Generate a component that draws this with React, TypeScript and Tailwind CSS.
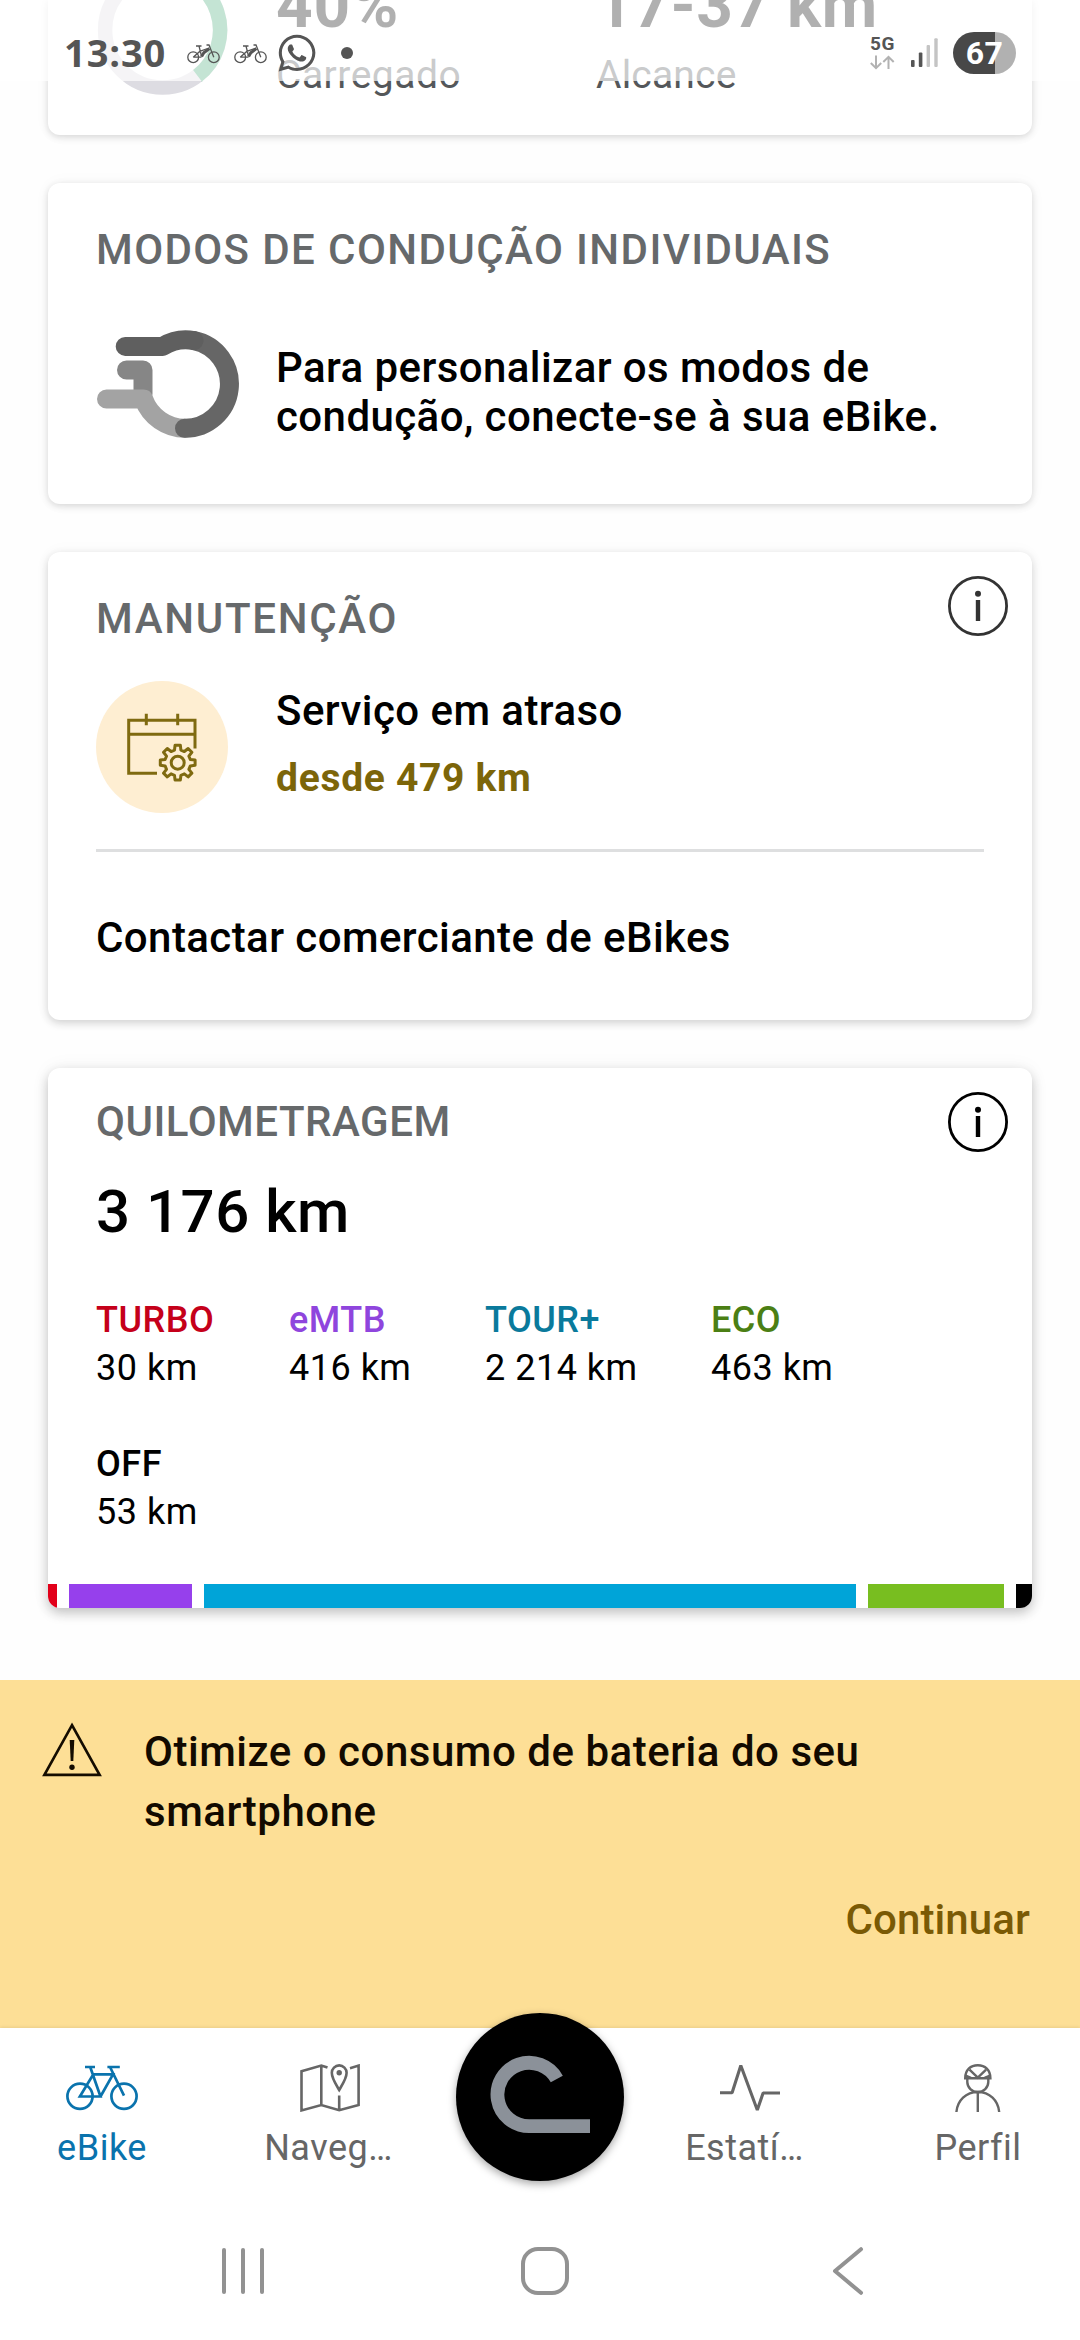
import type { ReactNode } from 'react'
import { clsx } from 'clsx'
import { FaWhatsapp } from 'react-icons/fa'

const MODES = [
  { name: 'TURBO', distance: '30 km', text: 'text-[#c5001a]', bar: 'bg-[#e2001a]', width: 9 },
  { name: 'eMTB', distance: '416 km', text: 'text-[#8f45dd]', bar: 'bg-[#9640ec]', width: 123 },
  { name: 'TOUR+', distance: '2 214 km', text: 'text-[#0a7a9c]', bar: 'bg-[#00a4d8]', width: 652 },
  { name: 'ECO', distance: '463 km', text: 'text-[#4b7f14]', bar: 'bg-[#78be20]', width: 136 },
  { name: 'OFF', distance: '53 km', text: 'text-black', bar: 'bg-black', width: 16 },
]

// Outline of an eight-toothed gear centred on (cx, cy)
function gearPath(cx: number, cy: number, outer: number, inner: number) {
  const points: string[] = []
  for (let i = 0; i < 8; i++) {
    const base = (i * Math.PI) / 4
    const corners: [number, number][] = [
      [-0.25, inner],
      [-0.15, outer],
      [0.15, outer],
      [0.25, inner],
    ]
    for (const [offset, r] of corners) {
      const x = cx + r * Math.cos(base + offset)
      const y = cy + r * Math.sin(base + offset)
      points.push(`${x.toFixed(2)} ${y.toFixed(2)}`)
    }
  }
  return `M${points.join('L')}Z`
}

/* ---------- Icons ---------- */

function InfoIcon({ className }: { className?: string }) {
  return (
    <svg width="60" height="60" viewBox="0 0 60 60" fill="none" className={className}>
      <circle cx="30" cy="30" r="28.6" stroke="currentColor" strokeWidth="2.8" />
      <circle cx="30" cy="17.8" r="3" fill="currentColor" />
      <path d="M30 24V45" stroke="currentColor" strokeWidth="4.4" />
    </svg>
  )
}

function ModesLogo() {
  return (
    <svg width="144" height="108" viewBox="0 0 144 108" fill="none" strokeWidth="19">
      <path d="M30.5 40H47V64" stroke="#868686" strokeLinecap="round" strokeLinejoin="round" />
      <path d="M10.5 69H47.6A44.5 44.5 0 0 0 89.3 98.3" stroke="#a3a3a3" strokeLinejoin="round" strokeLinecap="round" />
      <path d="M98 10.6A44.3 44.3 0 0 1 88.5 98.3" stroke="#666" strokeLinecap="round" />
      <path d="M29.2 16.4H66.7A44.3 44.3 0 0 1 98 10.6" stroke="#5f5f5f" strokeLinecap="round" strokeLinejoin="round" />
    </svg>
  )
}

function ServiceIcon() {
  return (
    <svg width="132" height="132" viewBox="0 0 132 132" fill="none" stroke="#7f6a10" strokeWidth="3">
      <path d="M61 92.3H32.7V39.3H99V67.5M32.7 53.3H99M50.3 32.7V44.3M81.7 32.7V44.3" />
      <path d={gearPath(81.7, 81.7, 17.6, 13)} strokeLinejoin="round" />
      <circle cx="81.7" cy="81.7" r="6.5" />
    </svg>
  )
}

function WarningIcon() {
  return (
    <svg width="60" height="56" viewBox="0 0 60 56" fill="none" className="text-[#140c00]">
      <path d="M30 3.2L57.6 52.8H2.4Z" stroke="currentColor" strokeWidth="2.7" />
      <path d="M27.7 18H32.3L31.3 39H28.7Z" fill="currentColor" />
      <circle cx="30" cy="45.3" r="2.7" fill="currentColor" />
    </svg>
  )
}

function BikeIcon() {
  return (
    <svg width="72" height="48" viewBox="0 0 72 48" fill="none" stroke="currentColor" strokeWidth="2.7">
      <circle cx="14" cy="32.3" r="12.6" />
      <circle cx="58" cy="32.3" r="12.6" />
      <path d="M19 3H29M24.2 3L34.5 32.5H13.9L27.3 10.3H47L34.5 32.5M41.4 3H53.8M44 3L58 31.7" />
    </svg>
  )
}

function MapIcon() {
  return (
    <svg width="60" height="48" viewBox="0 0 60 48" fill="none" stroke="currentColor" strokeWidth="2.6">
      <path d="M27.5 3.6L21.3 1.5L1.5 7.3V46.4L21.3 41L39.2 46.2L58.6 41V1.6L50 4.2M21.3 1.5V41M39.2 31.5V46" />
      <path d="M39.2 26C36 20.5 31.8 14.5 31.8 8.8A7.4 7.4 0 0 1 46.6 8.8C46.6 14.5 42.4 20.5 39.2 26Z" />
      <circle cx="39.2" cy="8.8" r="2.7" fill="currentColor" stroke="none" />
    </svg>
  )
}

function PulseIcon() {
  return (
    <svg width="60" height="48" viewBox="0 0 60 48" fill="none" stroke="currentColor" strokeWidth="3.1">
      <path d="M0 28.8H12.1L20.8 1.5L37.3 46L43.1 29H60" strokeLinejoin="bevel" />
    </svg>
  )
}

function RiderIcon() {
  return (
    <svg width="60" height="48" viewBox="0 0 60 48" fill="none" stroke="currentColor" strokeWidth="2.4">
      <path d="M17.2 14.2C17.2 6 22.5 1.3 29.8 1.3S42.4 6 42.4 14.2Z" />
      <path d="M21.5 5.6L29.8 13.6L38.1 5.6M17.6 11.5L23 13.8M42 11.5L36.6 13.8" />
      <path d="M19.3 14.5V18C19.3 23.5 24 28 29.8 28S40.3 23.5 40.3 18V14.5" />
      <path d="M8.4 48C9.4 36.5 18 28 29.8 28S50.2 36.5 51.2 48M29.8 28V48" />
    </svg>
  )
}

function SmallBikeIcon() {
  return (
    <svg width="33" height="20" viewBox="0 0 33 20" fill="none" stroke="#555" strokeWidth="1.3">
      <circle cx="6.2" cy="13.2" r="5.4" />
      <circle cx="26.8" cy="13.2" r="5.4" />
      <path d="M9 2H14.5M12 2L14.6 12.5M6.2 13.2L12.8 7.4L22 4M6.2 13.2H14.5M19.5 1H22L26.8 13.2" />
      <path d="M14.6 12.6L16.8 8.8L22.4 4.6" strokeWidth="3" strokeLinejoin="round" />
    </svg>
  )
}

/* ---------- Building blocks ---------- */

function Card({ className, children }: { className?: string; children: ReactNode }) {
  return (
    <section
      className={clsx(
        'mx-12 shrink-0 rounded-xl bg-white',
        className,
      )}
    >
      {children}
    </section>
  )
}

function Title({ className, children }: { className?: string; children: ReactNode }) {
  return <h2 className={clsx('text-[42px] font-medium leading-[48px] text-[#66696b]', className)}>{children}</h2>
}

function BatteryCard() {
  return (
    <Card className="flex h-[135px] rounded-t-none pl-12 shadow-[0_2px_7px_rgba(0,0,0,0.15),0_0_18px_rgba(0,0,0,0.03)]">
      <svg width="132" height="132" viewBox="0 0 132 132" fill="none" strokeWidth="14.5" className="-mt-9">
        <circle cx="66.6" cy="66" r="57.5" stroke="#dddce2" />
        <path d="M66.6 8.5A57.5 57.5 0 0 1 101.5 111.7" stroke="#41a874" />
      </svg>
      <div className="-mt-[30px] ml-12 w-[320px]">
        <div className="text-[64px] font-bold leading-[72px] tracking-[0.8px]">40%</div>
        <div className="mt-[12px] text-[39px] leading-[42px] tracking-[0.5px] text-[#54575a]">Carregado</div>
      </div>
      <div className="-mt-[30px]">
        <div className="text-[64px] font-bold leading-[72px] tracking-[0.5px]">17-37 km</div>
        <div className="mt-[12px] text-[39px] leading-[42px] tracking-[0.2px] text-[#54575a]">Alcance</div>
      </div>
    </Card>
  )
}

function RidingModesCard() {
  return (
    <Card className="mt-12 h-[321px] px-12 pt-[43px] shadow-[0_2px_7px_rgba(0,0,0,0.15),0_0_18px_rgba(0,0,0,0.03)]">
      <Title className="tracking-[1.4px]">MODOS DE CONDUÇÃO INDIVIDUAIS</Title>
      <div className="flex items-start">
        <div className="mt-14">
          <ModesLogo />
        </div>
        <p className="ml-9 mt-[69px] whitespace-nowrap text-[42px] font-medium leading-[49px] tracking-[0.42px]">
          Para personalizar os modos de
          <br />
          condução, conecte-se à sua eBike.
        </p>
      </div>
    </Card>
  )
}

function MaintenanceCard() {
  return (
    <Card className="mt-12 h-[468px] pt-6 shadow-[0_3px_8px_rgba(0,0,0,0.17),0_0_18px_rgba(0,0,0,0.03)]">
      <header className="flex items-start justify-between pl-12 pr-6">
        <Title className="mt-[19px] tracking-[1.7px]">MANUTENÇÃO</Title>
        <InfoIcon className="text-[#333]" />
      </header>
      <div className="mt-[38px] flex pl-12">
        <div className="size-[132px] rounded-full bg-[#feeed2]">
          <ServiceIcon />
        </div>
        <div className="ml-12 pt-[6px] leading-[48px]">
          <div className="text-[42px] font-medium tracking-[0.45px]">Serviço em atraso</div>
          <div className="mt-[19px] text-[39px] font-bold tracking-[0.7px] text-[#7c6509]">desde 479 km</div>
        </div>
      </div>
      <div className="mx-12 mt-9 h-[3px] bg-[#dedfe0]" />
      <div className="mt-[62px] pl-12 text-[42px] font-medium leading-[48px] tracking-[0.42px]">
        Contactar comerciante de eBikes
      </div>
    </Card>
  )
}

function MileageCard() {
  return (
    <Card className="mt-12 h-[540px] overflow-hidden pt-6 shadow-[0_5px_12px_rgba(0,0,0,0.22),0_0_20px_rgba(0,0,0,0.05)]">
      <header className="flex items-start justify-between pl-12 pr-6">
        <Title className="mt-[6px] tracking-[0.5px]">QUILOMETRAGEM</Title>
        <InfoIcon className="text-black" />
      </header>
      <div className="mt-6 pl-12 text-[60px] font-medium leading-[72px] tracking-[0.5px]">3 176 km</div>
      <div className="mt-12 grid grid-cols-[193px_196px_226px_auto] gap-y-12 pl-12 text-[36px] leading-[48px] tracking-[0.5px]">
        {MODES.map((mode) => (
          <div key={mode.name}>
            <div className={clsx('font-medium', mode.text)}>{mode.name}</div>
            <div>{mode.distance}</div>
          </div>
        ))}
      </div>
      <div className="mt-12 flex h-6 gap-3">
        {MODES.map((mode) => (
          <div key={mode.name} className={mode.bar} style={{ width: mode.width }} />
        ))}
      </div>
    </Card>
  )
}

function BatteryBanner() {
  return (
    <section className="mt-[72px] h-[348px] shrink-0 bg-[#fddf96] pt-[42px] font-medium">
      <div className="flex pl-[42px]">
        <WarningIcon />
        <p className="ml-[42px] text-[42px] leading-[60px] tracking-[0.52px] text-[#120a00]">
          Otimize o consumo de bateria do seu
          <br />
          smartphone
        </p>
      </div>
      <div className="mt-[54px] pr-[50px] text-right text-[42px] leading-[48px] tracking-[0.1px] text-[#7a5a05]">
        Continuar
      </div>
    </section>
  )
}

type NavItemProps = {
  icon: ReactNode
  label: string
  active?: boolean
  labelClassName?: string
}

function NavItem({ icon, label, active, labelClassName }: NavItemProps) {
  return (
    <div className={clsx('flex flex-col items-center pt-9', active ? 'text-[#0a73ad]' : 'text-[#666]')}>
      {icon}
      <span className={clsx('mt-3 text-[36px] leading-[48px] tracking-[0.5px]', labelClassName)}>{label}</span>
    </div>
  )
}

function BottomNav() {
  return (
    <nav className="grid h-[192px] shrink-0 grid-cols-[204px_252px_168px_252px_204px] bg-white shadow-[0_-1px_3px_rgba(0,0,0,0.08)]">
      <NavItem icon={<BikeIcon />} label="eBike" active />
      <NavItem icon={<MapIcon />} label="Naveg…" labelClassName="pr-[3px]" />
      <div className="-mt-[15px] size-[168px] rounded-full bg-black shadow-[0_3px_8px_rgba(0,0,0,0.35)]">
        <svg width="168" height="168" viewBox="0 0 168 168" fill="none">
          <path d="M100.8 66A31.7 31.7 0 1 0 73.2 113.2H134" stroke="#8b9199" strokeWidth="13.8" />
        </svg>
      </div>
      <NavItem icon={<PulseIcon />} label="Estatí…" labelClassName="pr-[11px]" />
      <NavItem icon={<RiderIcon />} label="Perfil" />
    </nav>
  )
}

function SystemNav() {
  return (
    <div className="flex h-[120px] shrink-0 items-start bg-white pl-[222px] pt-[27px]">
      <div className="mt-[1px] flex gap-[15px]">
        <div className="h-[46px] w-1 rounded-full bg-[#929292]" />
        <div className="h-[46px] w-1 rounded-full bg-[#929292]" />
        <div className="h-[46px] w-1 rounded-full bg-[#929292]" />
      </div>
      <div className="ml-[257px] h-12 w-12 rounded-[17px] border-4 border-[#929292]" />
      <svg width="32" height="48" viewBox="0 0 32 48" fill="none" className="ml-[263px]">
        <path d="M29 2.2L3 24L29 45.8" stroke="#929292" strokeWidth="4" strokeLinecap="round" strokeLinejoin="round" />
      </svg>
    </div>
  )
}

// Translucent, so the scrolled content stays visible behind it
function StatusBar() {
  return (
    <div className="absolute inset-x-0 top-0 flex h-[81px] items-start bg-white/69 text-[#555]">
      <div className="ml-16 mt-[28px] w-[123px] font-['Open_Sans',sans-serif] text-[38px] font-bold leading-[48px] tracking-[0.9px]">
        13:30
      </div>
      <div className="mt-11 flex gap-[14px]">
        <SmallBikeIcon />
        <SmallBikeIcon />
      </div>
      <FaWhatsapp size={42} className="ml-[9px] mt-8" />
      <div className="ml-[23px] mt-[47px] size-3 rounded-full bg-[#555]" />
      <div className="ml-auto mt-[35px] w-[25px]">
        <div className="text-[19px] font-bold leading-[18px] tracking-[0.5px]">5G</div>
        <svg width="25" height="15" viewBox="0 0 25 15" fill="none" stroke="#b2b2b2" strokeWidth="2" className="mt-[2px]">
          <path d="M6 0.5V13M0.8 8L6 13.2L11.2 8M18.5 14V2M13.3 7L18.5 1.8L23.7 7" />
        </svg>
      </div>
      <svg width="27" height="30" viewBox="0 0 27 30" className="ml-4 mt-[38px]">
        <rect x="0" y="22" width="3.6" height="7" rx="1" fill="#555" />
        <rect x="7.8" y="14.5" width="3.6" height="14.5" rx="1" fill="#555" />
        <rect x="15.6" y="7" width="3.4" height="22" rx="1" fill="#c4c4c4" />
        <rect x="23.3" y="0.3" width="3.4" height="28.7" rx="1" fill="#c4c4c4" />
      </svg>
      <div className="ml-[15px] mr-16 mt-8 h-[42px] w-[63px] rounded-full bg-[linear-gradient(90deg,#484848_67%,#b1b1b1_67%)] text-center text-[32px] font-bold leading-[42px] tracking-[0.5px] text-white">
        67
      </div>
    </div>
  )
}

export default function App() {
  return (
    <div className="relative flex h-[2340px] w-[1080px] flex-col overflow-hidden bg-[#fefefe] font-['Roboto',sans-serif] text-black">
      <BatteryCard />
      <RidingModesCard />
      <MaintenanceCard />
      <MileageCard />
      <BatteryBanner />
      <BottomNav />
      <SystemNav />
      <StatusBar />
    </div>
  )
}
